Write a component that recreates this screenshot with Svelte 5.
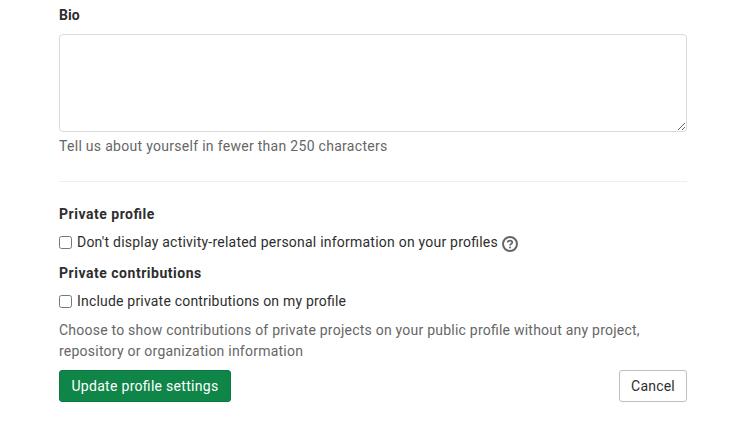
<script>
  let bio = $state('');
  let privateProfile = $state(false);
  let privateContributions = $state(false);
</script>

<form class="profile">
  <label class="heading" for="bio">Bio</label>
  <textarea id="bio" bind:value={bio}></textarea>
  <div class="hint">Tell us about yourself in fewer than 250 characters</div>
  <hr />
  <h5>Private profile</h5>
  <div class="check first">
    <input id="pp" type="checkbox" bind:checked={privateProfile} />
    <label for="pp">Don't display activity-related personal information on your profiles</label>
    <svg width="16" height="16" viewBox="0 0 16 16" fill="none" stroke="#666" stroke-width="2">
      <circle cx="8" cy="8" r="7" />
      <path d="M5.700 6.600C5.700 5.200 6.700 4.600 8 4.600s2.300.7 2.300 1.900C10.300 7.800 8 7.800 8 9.600" stroke-width="1.700" />
      <circle cx="8" cy="11.500" r="1" fill="#666" stroke="none" />
    </svg>
  </div>
  <h5>Private contributions</h5>
  <div class="check">
    <input id="pc" type="checkbox" bind:checked={privateContributions} />
    <label for="pc">Include private contributions on my profile</label>
  </div>
  <p>Choose to show contributions of private projects on your public profile without any project, repository or organization information</p>
  <div class="actions">
    <button class="save" type="button">Update profile settings</button>
    <button class="cancel" type="button">Cancel</button>
  </div>
</form>

<style>
  :global(body) { background: #fff; overflow: hidden; }
  .profile {
    box-sizing: border-box;
    width: 628px;
    margin-left: 59px;
    padding-top: 5px;
    font: 14px/21px Roboto, "Noto Sans", sans-serif;
    font-feature-settings: "liga" 1;
    color: #2e2e2e;
  }
  .heading { display: block; font-weight: 700; margin-bottom: 8px; }
  textarea {
    display: block;
    box-sizing: border-box;
    width: 628px;
    height: 98px;
    margin: 0;
    padding: 6px 10px;
    border: 1px solid #dbdbdb;
    border-radius: 4px;
    font: inherit;
    resize: vertical;
  }
  .hint { margin-top: 4px; color: #666; letter-spacing: 0.295px; }
  hr { margin: 24px 0 22px; border: 0; border-top: 1px solid #eee; }
  h5 { margin: 0; font: inherit; font-weight: 700; letter-spacing: 0.52px; }
  .check { display: flex; align-items: center; height: 21px; margin: 7px 0 8px; letter-spacing: 0.195px; }
  .check.first { margin-bottom: 10px; letter-spacing: 0.225px; }
  .check input { width: 13px; height: 13px; margin: 0 5px 0 0; }
  .check svg { margin: 3px 0 0 4px; }
  p { margin: 0; color: #666; letter-spacing: 0.23px; }
  .actions { display: flex; justify-content: space-between; margin-top: 8px; }
  button {
    box-sizing: border-box;
    height: 32px;
    padding: 0 11px;
    border-radius: 3px;
    font: inherit;
    font-feature-settings: "liga" 1;
    white-space: nowrap;
  }
  .save { width: 172px; color: #fff; background: #108548; border: 1px solid #0e7741; letter-spacing: 0.3px; }
  .cancel { width: 68px; color: #2e2e2e; background: #fff; border: 1px solid #bfbfbf; letter-spacing: 0.2px; }
</style>
